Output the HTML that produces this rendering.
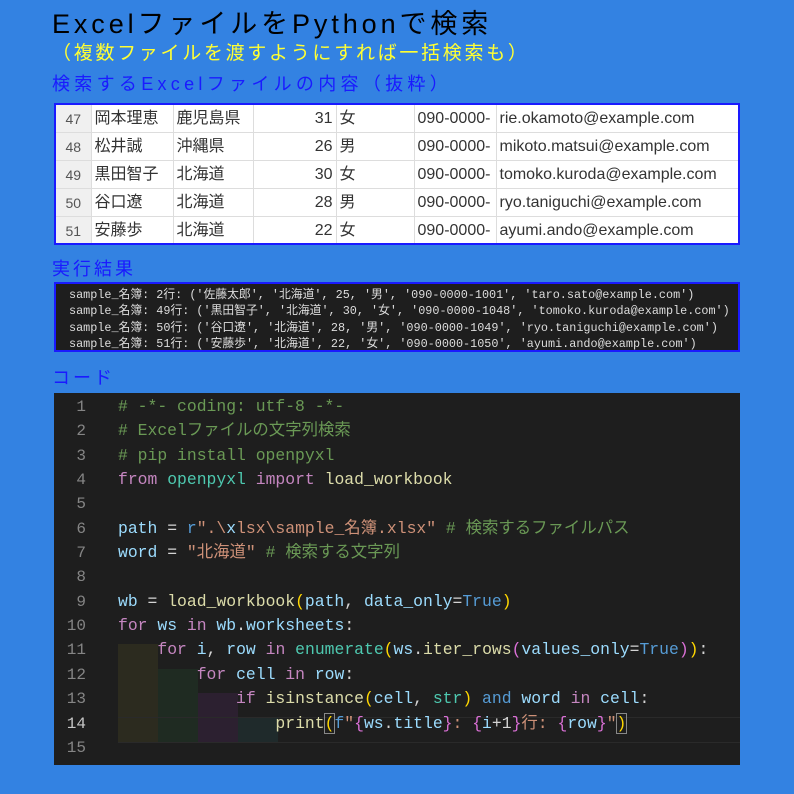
<!DOCTYPE html>
<html><head><meta charset="utf-8"><style>
*{margin:0;padding:0;box-sizing:border-box}
body{width:794px;height:794px;background:#3382e2;position:relative;overflow:hidden;font-family:"Liberation Sans","Noto Sans CJK JP",sans-serif}
.a{position:absolute;white-space:nowrap;line-height:1.2}
table{border-collapse:collapse;position:absolute;left:54px;top:103px;width:686px;height:140px;border:2px solid #1a1aff;background:#fff;font-size:16px;color:#333;table-layout:fixed}
td{border:1px solid #ddd;height:28px;line-height:18px;padding:2px 3px 0;white-space:nowrap;overflow:hidden;vertical-align:middle}
td.n{background:#f0f0f0;color:#555;text-align:center;font-size:14px}
td.r{text-align:right}
.out{position:absolute;left:54px;top:282px;width:686px;height:70px;background:#1e1e1e;border:2px solid #1a1aff;color:#ddd;font-family:"Liberation Mono","Noto Sans CJK JP",monospace;font-size:11.8px;line-height:16.3px;padding:3px 0 0 13px;white-space:pre;overflow:hidden}
.code{position:absolute;left:54px;top:393px;width:686px;height:372px;background:#1e1e1e}
.ln{position:absolute;left:0;width:32px;text-align:right;color:#858585;font-family:"Liberation Mono",monospace;font-size:16px;line-height:20px;height:20px}
.cl{position:absolute;left:64px;white-space:pre;font-family:"Liberation Mono","Noto Sans CJK JP",monospace;font-size:16.4px;color:#d4d4d4;line-height:20px;height:20px}
.c{color:#6a9955}.k{color:#c586c0}.f{color:#dcdcaa}.v{color:#9cdcfe}.s{color:#ce9178}.t{color:#4ec9b0}.b{color:#569cd6}.y{color:#ffd700}.p{color:#da70d6}
</style></head><body>
<div class="a" style="left:52px;top:8px;font-size:27px;letter-spacing:3.9px;color:#000">ExcelファイルをPythonで検索</div>
<div class="a" style="left:52px;top:43px;font-size:19px;letter-spacing:2.7px;color:#ffff33">（複数ファイルを渡すようにすれば一括検索も）</div>
<div class="a" style="left:52px;top:74px;font-size:18px;letter-spacing:4.3px;color:#1a1aff">検索するExcelファイルの内容（抜粋）</div>
<table>
<colgroup><col style="width:36px"><col style="width:82px"><col style="width:80px"><col style="width:83px"><col style="width:78px"><col style="width:82px"><col></colgroup>
<tr><td class="n">47</td><td>岡本理恵</td><td>鹿児島県</td><td class="r">31</td><td>女</td><td>090-0000-</td><td>rie.okamoto@example.com</td></tr>
<tr><td class="n">48</td><td>松井誠</td><td>沖縄県</td><td class="r">26</td><td>男</td><td>090-0000-</td><td>mikoto.matsui@example.com</td></tr>
<tr><td class="n">49</td><td>黒田智子</td><td>北海道</td><td class="r">30</td><td>女</td><td>090-0000-</td><td>tomoko.kuroda@example.com</td></tr>
<tr><td class="n">50</td><td>谷口遼</td><td>北海道</td><td class="r">28</td><td>男</td><td>090-0000-</td><td>ryo.taniguchi@example.com</td></tr>
<tr><td class="n">51</td><td>安藤歩</td><td>北海道</td><td class="r">22</td><td>女</td><td>090-0000-</td><td>ayumi.ando@example.com</td></tr>
</table>
<div class="a" style="left:52px;top:259px;font-size:18px;letter-spacing:3px;color:#1a1aff">実行結果</div>
<div class="out">sample_名簿: 2行: ('佐藤太郎', '北海道', 25, '男', '090-0000-1001', 'taro.sato@example.com')
sample_名簿: 49行: ('黒田智子', '北海道', 30, '女', '090-0000-1048', 'tomoko.kuroda@example.com')
sample_名簿: 50行: ('谷口遼', '北海道', 28, '男', '090-0000-1049', 'ryo.taniguchi@example.com')
sample_名簿: 51行: ('安藤歩', '北海道', 22, '女', '090-0000-1050', 'ayumi.ando@example.com')</div>
<div class="a" style="left:52px;top:368px;font-size:18px;letter-spacing:3px;color:#1a1aff">コード</div>
<div class="code">
<div style="position:absolute;left:64px;top:251px;width:40px;height:98px;background:#2c2b1f"></div>
<div style="position:absolute;left:104px;top:276px;width:40px;height:73px;background:#1f2b22"></div>
<div style="position:absolute;left:144px;top:300px;width:40px;height:49px;background:#2c2030"></div>
<div style="position:absolute;left:184px;top:325px;width:40px;height:24px;background:#1f2a2b"></div>
<div style="position:absolute;left:64px;top:324px;width:622px;height:26px;border-top:1px solid #2a2a2a;border-bottom:1px solid #2a2a2a"></div>
<div class="ln" style="top:4px">1</div><div class="ln" style="top:28px">2</div><div class="ln" style="top:53px">3</div><div class="ln" style="top:77px">4</div><div class="ln" style="top:101px">5</div><div class="ln" style="top:126px">6</div><div class="ln" style="top:150px">7</div><div class="ln" style="top:174px">8</div><div class="ln" style="top:199px">9</div><div class="ln" style="top:223px">10</div><div class="ln" style="top:247px">11</div><div class="ln" style="top:272px">12</div><div class="ln" style="top:296px">13</div><div class="ln" style="top:321px;color:#c6c6c6">14</div><div class="ln" style="top:345px">15</div>
<div class="cl c" style="top:4px"># -*- coding: utf-8 -*-</div>
<div class="cl c" style="top:28px"># Excelファイルの文字列検索</div>
<div class="cl c" style="top:53px"># pip install openpyxl</div>
<div class="cl" style="top:77px"><span class="k">from</span> <span class="t">openpyxl</span> <span class="k">import</span> <span class="f">load_workbook</span></div>
<div class="cl" style="top:126px"><span class="v">path</span> = <span class="b">r</span><span class="s">".\</span><span class="v">x</span><span class="s">lsx\sample_名簿.xlsx"</span> <span class="c"># 検索するファイルパス</span></div>
<div class="cl" style="top:150px"><span class="v">word</span> = <span class="s">"北海道"</span> <span class="c"># 検索する文字列</span></div>
<div class="cl" style="top:199px"><span class="v">wb</span> = <span class="f">load_workbook</span><span class="y">(</span><span class="v">path</span>, <span class="v">data_only</span>=<span class="b">True</span><span class="y">)</span></div>
<div class="cl" style="top:223px"><span class="k">for</span> <span class="v">ws</span> <span class="k">in</span> <span class="v">wb</span>.<span class="v">worksheets</span>:</div>
<div class="cl" style="top:247px">    <span class="k">for</span> <span class="v">i</span>, <span class="v">row</span> <span class="k">in</span> <span class="t">enumerate</span><span class="y">(</span><span class="v">ws</span>.<span class="f">iter_rows</span><span class="p">(</span><span class="v">values_only</span>=<span class="b">True</span><span class="p">)</span><span class="y">)</span>:</div>
<div class="cl" style="top:272px">        <span class="k">for</span> <span class="v">cell</span> <span class="k">in</span> <span class="v">row</span>:</div>
<div class="cl" style="top:296px">            <span class="k">if</span> <span class="f">isinstance</span><span class="y">(</span><span class="v">cell</span>, <span class="t">str</span><span class="y">)</span> <span class="b">and</span> <span class="v">word</span> <span class="k">in</span> <span class="v">cell</span>:</div>
<div class="cl" style="top:321px">                <span class="f">print</span><span class="y" style="outline:1px solid #888">(</span><span class="b">f</span><span class="s">"</span><span class="p">{</span><span class="v">ws</span>.<span class="v">title</span><span class="p">}</span><span class="s">: </span><span class="p">{</span><span class="v">i</span>+1<span class="p">}</span><span class="s">行: </span><span class="p">{</span><span class="v">row</span><span class="p">}</span><span class="s">"</span><span class="y" style="outline:1px solid #888">)</span></div>
</div>
</body></html>
